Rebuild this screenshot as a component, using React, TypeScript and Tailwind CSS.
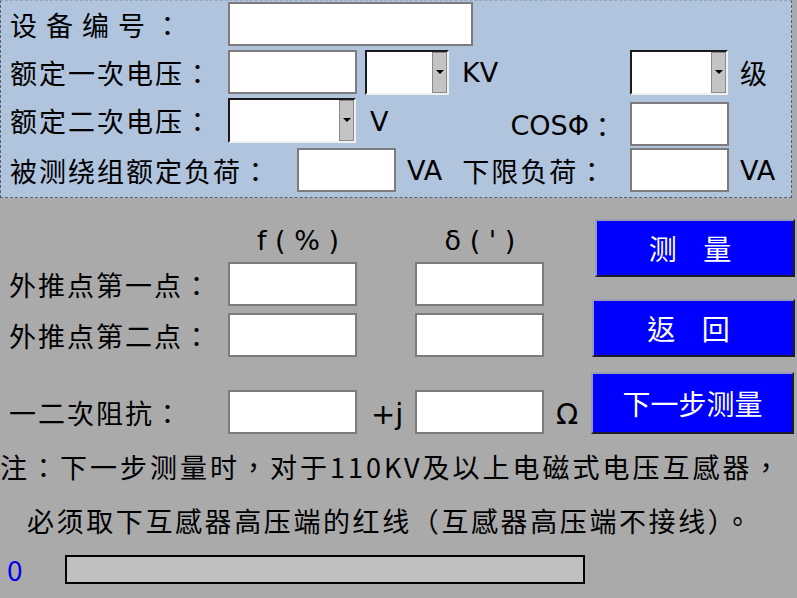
import React from 'react';

const Box: React.FC<{ w: string; extra?: string }> = ({ w, extra = '' }) => (
  <div className={`${w} h-[44px] bg-white border-2 border-[#7c7c7c] shrink-0 ${extra}`}></div>
);

const Combo: React.FC<{ w: string; extra?: string }> = ({ w, extra = '' }) => (
  <div
    className={`${w} h-[45px] bg-white flex justify-end border-t-2 border-l-2 border-[#1a1a1a] border-b-2 border-r-2 border-b-[#f0f0f0] border-r-[#f0f0f0] shrink-0 ${extra}`}
  >
    <div className="w-[15px] h-full bg-[#c4c4c4] border border-[#8a8a8a] flex items-center justify-center">
      <div className="w-0 h-0 border-l-[4px] border-r-[4px] border-t-[4px] border-l-transparent border-r-transparent border-t-black"></div>
    </div>
  </div>
);

const BlueButton: React.FC<{ label: string; extra: string }> = ({ label, extra }) => (
  <button
    className={`bg-[#0000ff] text-white text-[28px] leading-none flex items-center justify-center border-2 border-t-[#9a9ab8] border-l-[#9a9ab8] border-b-[#1c1c2c] border-r-[#1c1c2c] ${extra}`}
  >
    {label}
  </button>
);

// 英文单位用较宽的字体
const Unit: React.FC<{ text: string; extra?: string }> = ({ text, extra = '' }) => (
  <span className={`font-['DejaVu_Sans',sans-serif] text-[27px] tracking-[0px] ${extra}`}>{text}</span>
);

export default function App() {
  return (
    <div className="w-[797px] h-[598px] bg-[#aaaaaa] text-black text-[27px] leading-none tracking-[2px] font-['Noto_Sans_CJK_TC','Noto_Sans',sans-serif] overflow-hidden">
      {/* 参数区 */}
      <div className="w-[792px] h-[198px] bg-[#b0c4de] border border-dashed border-[#5a5f70] border-t-[#9aa6b8] flex flex-col pl-[9px] pt-[1px]">
        <div className="flex items-center h-[44px]">
          <span className="w-[218px] tracking-[9px]">设备编号：</span>
          <Box w="w-[245px]" />
        </div>

        <div className="flex items-center h-[44px] mt-[4px]">
          <div className="w-[620px] flex items-center">
            <span className="w-[218px]">额定一次电压：</span>
            <Box w="w-[129px]" />
            <Combo w="w-[84px]" extra="ml-[8px]" />
            <Unit text="KV" extra="ml-[13px]" />
          </div>
          <Combo w="w-[98px]" />
          <span className="ml-[12px]">级</span>
        </div>

        <div className="flex items-start h-[48px] mt-[4px]">
          <div className="w-[620px] flex items-center h-[44px]">
            <span className="w-[218px]">额定二次电压：</span>
            <Combo w="w-[128px]" />
            <Unit text="V" extra="ml-[14px] mt-[2px]" />
            <span className="ml-auto mr-[12px] mt-[10px] flex items-center">
              <Unit text="COSΦ" />
              <span>：</span>
            </span>
          </div>
          <Box w="w-[99px]" extra="mt-[4px]" />
        </div>

        <div className="flex items-center h-[44px] mt-[2px]">
          <div className="w-[620px] flex items-center">
            <span className="w-[287px]">被测绕组额定负荷：</span>
            <Box w="w-[99px]" />
            <Unit text="VA" extra="ml-[11px]" />
            <span className="ml-[20px]">下限负荷：</span>
          </div>
          <Box w="w-[99px]" />
          <Unit text="VA" extra="ml-[11px]" />
        </div>
      </div>

      {/* 测量区 */}
      <div className="flex">
        <div className="w-[591px] flex flex-col pl-[9px] pt-[24px]">
          <div className="flex items-center h-[36px]">
            <span className="w-[219px]"></span>
            <Unit text="f ( % )" extra="w-[140px] text-center" />
            <span className="w-[47px]"></span>
            <Unit text="δ ( ' )" extra="w-[130px] text-center" />
          </div>
          <div className="flex items-center h-[44px] mt-[4px]">
            <span className="w-[219px]">外推点第一点：</span>
            <Box w="w-[129px]" />
            <Box w="w-[129px]" extra="ml-[58px]" />
          </div>
          <div className="flex items-center h-[44px] mt-[7px]">
            <span className="w-[219px]">外推点第二点：</span>
            <Box w="w-[129px]" />
            <Box w="w-[129px]" extra="ml-[58px]" />
          </div>
          <div className="flex items-center h-[44px] mt-[33px]">
            <span className="w-[219px]">一二次阻抗：</span>
            <Box w="w-[129px]" />
            <Unit text="+j" extra="w-[58px] pl-[14px] mt-[4px] text-[29px]" />
            <Box w="w-[129px]" />
            <Unit text="Ω" extra="ml-[12px] mt-[4px] text-[29px]" />
          </div>
        </div>

        <div className="flex flex-col pt-[21px]">
          <BlueButton label="测  量" extra="w-[200px] h-[58px] ml-[4px] tracking-[10px]" />
          <BlueButton label="返  回" extra="w-[203px] h-[58px] ml-[1px] mt-[22px] tracking-[10px]" />
          <BlueButton label="下一步测量" extra="w-[203px] h-[62px] mt-[15px] tracking-[0px]" />
        </div>
      </div>

      {/* 提示 */}
      <div className="mt-[6px] text-[27px] leading-[54px]">
        <p className="whitespace-nowrap tracking-[3px]">注：下一步测量时，对于110KV及以上电磁式电压互感器，</p>
        <p className="whitespace-nowrap pl-[27px] tracking-[2.6px]">必须取下互感器高压端的红线（互感器高压端不接线）。</p>
      </div>

      <div className="flex items-center mt-[6px] h-[30px]">
        <span className="w-[65px] pl-[7px] text-[#0000ee] text-[28px]">0</span>
        <div className="w-[520px] h-[29px] bg-[#c0c0c0] border-2 border-black"></div>
      </div>
    </div>
  );
}
